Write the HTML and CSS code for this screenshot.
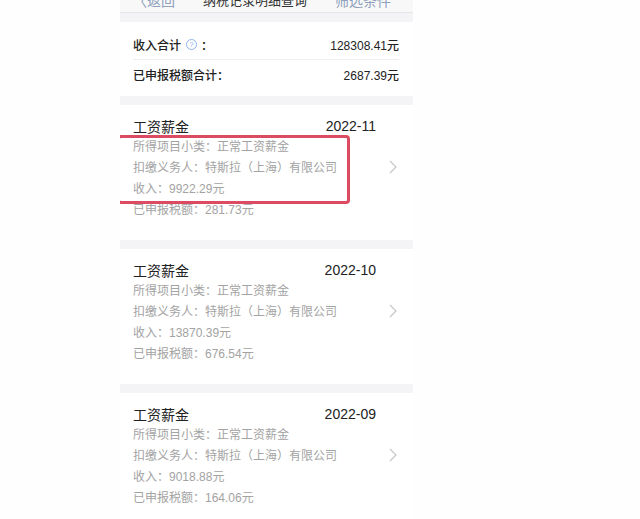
FILE: index.html
```html
<!DOCTYPE html>
<html lang="zh-CN">

<head>
    <meta charset="utf-8">
    <title>纳税记录</title>
    <link rel="stylesheet" href="styles.css">
</head>

<body>
    <div class="phone">
        <div class="nav">
            <span class="nav-back">〈返回</span>
            <span class="nav-title">纳税记录明细查询</span>
            <span class="nav-action">筛选条件</span>
        </div>

        <div class="summary">
            <div class="summary-row">
                <span class="summary-label">收入合计 <span class="help">?</span> ：</span>
                <span class="summary-value">128308.41元</span>
            </div>
            <div class="summary-row">
                <span class="summary-label">已申报税额合计：</span>
                <span class="summary-value">2687.39元</span>
            </div>
        </div>

        <div class="record">
            <div class="record-main">
                <div class="record-head">
                    <span class="record-title">工资薪金</span>
                    <span class="record-date">2022-11</span>
                </div>
                <div class="record-line">所得项目小类：正常工资薪金</div>
                <div class="record-line">扣缴义务人：特斯拉（上海）有限公司</div>
                <div class="record-line">收入：9922.29元</div>
                <div class="record-line">已申报税额：281.73元</div>
            </div>
            <svg class="chevron" width="8" height="14" viewBox="0 0 8 14" fill="none" stroke="currentColor" stroke-width="1.2">
                <polyline points="1,1 7,7 1,13"></polyline>
            </svg>
            <div class="highlight"></div>
        </div>

        <div class="record">
            <div class="record-main">
                <div class="record-head">
                    <span class="record-title">工资薪金</span>
                    <span class="record-date">2022-10</span>
                </div>
                <div class="record-line">所得项目小类：正常工资薪金</div>
                <div class="record-line">扣缴义务人：特斯拉（上海）有限公司</div>
                <div class="record-line">收入：13870.39元</div>
                <div class="record-line">已申报税额：676.54元</div>
            </div>
            <svg class="chevron" width="8" height="14" viewBox="0 0 8 14" fill="none" stroke="currentColor" stroke-width="1.2">
                <polyline points="1,1 7,7 1,13"></polyline>
            </svg>
        </div>

        <div class="record">
            <div class="record-main">
                <div class="record-head">
                    <span class="record-title">工资薪金</span>
                    <span class="record-date">2022-09</span>
                </div>
                <div class="record-line">所得项目小类：正常工资薪金</div>
                <div class="record-line">扣缴义务人：特斯拉（上海）有限公司</div>
                <div class="record-line">收入：9018.88元</div>
                <div class="record-line">已申报税额：164.06元</div>
            </div>
            <svg class="chevron" width="8" height="14" viewBox="0 0 8 14" fill="none" stroke="currentColor" stroke-width="1.2">
                <polyline points="1,1 7,7 1,13"></polyline>
            </svg>
        </div>
    </div>
</body>

</html>
```

FILE: styles.css
```css
body {
    margin: 0;
    background-color: #fefefe;
    font-family: "Liberation Sans", "Noto Sans CJK SC", sans-serif;
    color: #222222;
    overflow: hidden;
}

.phone {
    width: 293px;
    margin-left: 120px;
    height: 519px;
    background-color: #f4f4f7;
    overflow: hidden;
}

.nav {
    height: 12px;
    display: flex;
    align-items: flex-end;
    justify-content: space-between;
    padding: 0 22px 0 13px;
    background-color: #f8f8f8;
    border-bottom: 1px solid #e6e6ea;
    overflow: hidden;
    font-size: 14px;
}

.nav span {
    line-height: 20px;
    margin-bottom: 1px;
    white-space: nowrap;
}

.nav-back,
.nav-action {
    color: #8ea0bb;
}

.nav-title {
    color: #333333;
    font-size: 13px;
}

.summary {
    margin-top: 9px;
    background-color: #ffffff;
    padding: 8px 14px 7px 13px;
}

.summary-row {
    display: flex;
    justify-content: space-between;
    align-items: center;
    height: 29px;
    font-size: 12px;
    font-weight: 500;
    color: #222222;
}

.summary-row:first-child {
    border-bottom: 1px solid #efeff2;
}

.summary-label {
    display: flex;
    align-items: center;
}

.help {
    display: inline-flex;
    align-items: center;
    justify-content: center;
    width: 9px;
    height: 9px;
    margin: 0 4px 0 5px;
    border: 1px solid #8fb5ef;
    border-radius: 50%;
    color: #8fb5ef;
    font-size: 8px;
    font-weight: 400;
}

.summary-value {
    font-size: 12px;
}

.record {
    position: relative;
    margin-top: 9px;
    background-color: #ffffff;
    display: flex;
    align-items: center;
    padding: 11px 16px 19px 13px;
}

.record-main {
    flex: 1;
    margin-right: 13px;
}

.record-head {
    display: flex;
    justify-content: space-between;
    align-items: center;
    height: 20px;
    margin-bottom: 1px;
    font-size: 14px;
    color: #222222;
}

.record-date {
    font-size: 14px;
}

.record-line {
    font-size: 12px;
    line-height: 21px;
    color: #a3a3a3;
    white-space: nowrap;
}

.chevron {
    color: #c6c6c8;
    margin-top: -4px;
}

.highlight {
    position: absolute;
    left: -3px;
    top: 30px;
    width: 227px;
    height: 63px;
    border: 3px solid #dc4b61;
    border-radius: 4px;
}
```
